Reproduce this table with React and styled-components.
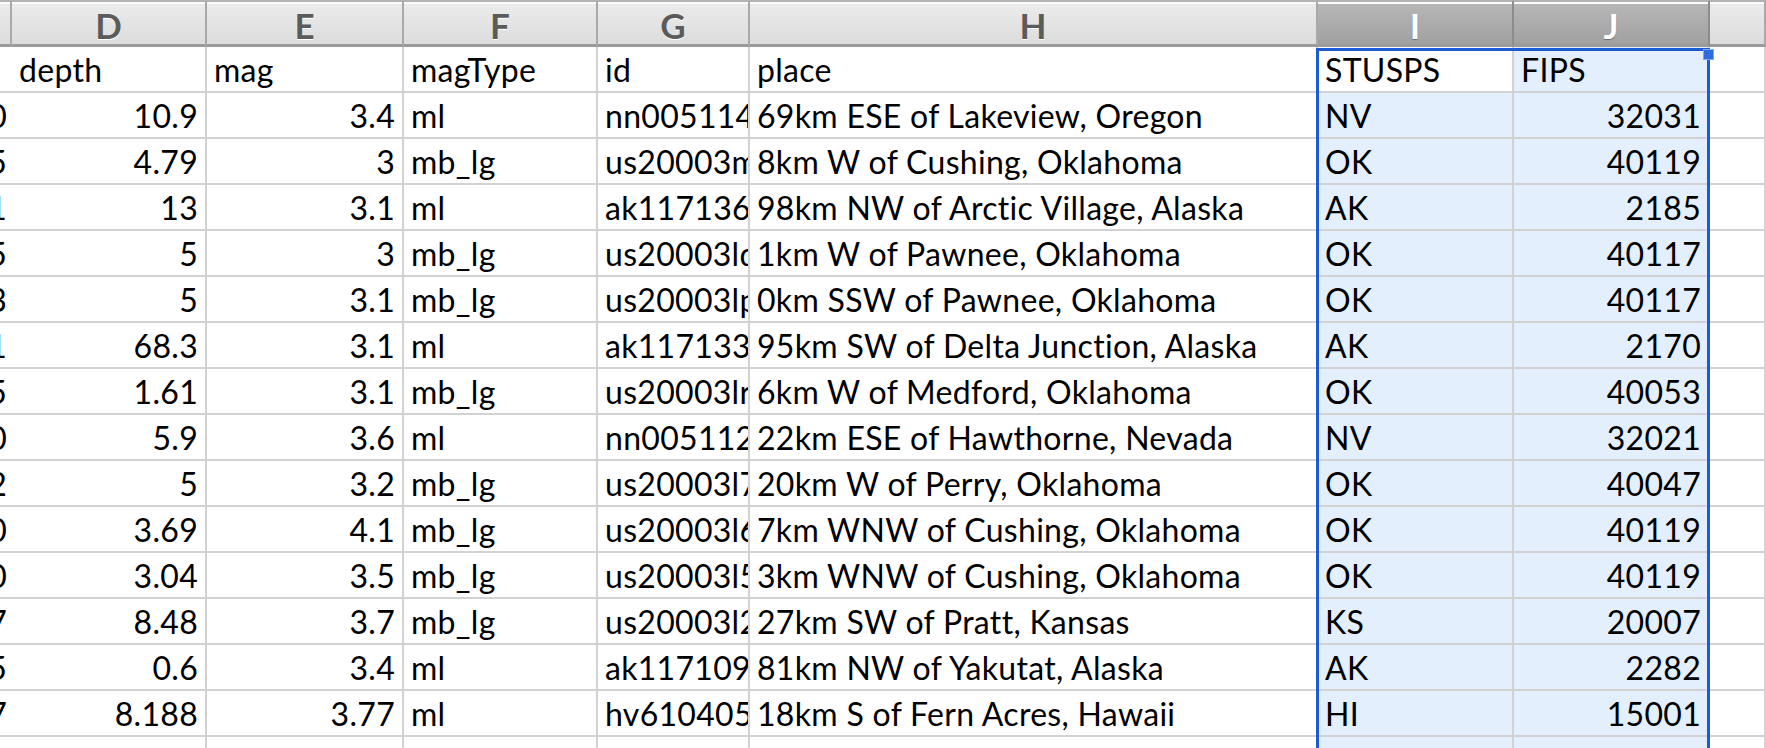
import React from 'react'
import styled, { createGlobalStyle } from 'styled-components'

const GlobalStyle = createGlobalStyle`
  html, body {
    margin: 0;
    padding: 0;
    background: #ffffff;
    overflow: hidden;
  }
  body {
    font-family: Lato, "Liberation Sans", sans-serif;
  }
`

const columns = [
  { key: 'C', width: 12, align: 'right' },
  { key: 'D', width: 195, align: 'right' },
  { key: 'E', width: 197, align: 'right' },
  { key: 'F', width: 194, align: 'left' },
  { key: 'G', width: 152, align: 'left' },
  { key: 'H', width: 568, align: 'left' },
  { key: 'I', width: 196, align: 'left', selected: true },
  { key: 'J', width: 196, align: 'right', selected: true },
  { key: 'K', width: 80, align: 'left' },
]

const fields = ['', 'depth', 'mag', 'magType', 'id', 'place', 'STUSPS', 'FIPS', '']

const rows = [
  ['-119.9460', '10.9', '3.4', 'ml', 'nn00511432', '69km ESE of Lakeview, Oregon', 'NV', '32031'],
  ['-96.8575', '4.79', '3', 'mb_lg', 'us20003mxu', '8km W of Cushing, Oklahoma', 'OK', '40119'],
  ['-146.1451', '13', '3.1', 'ml', 'ak11713611', '98km NW of Arctic Village, Alaska', 'AK', '2185'],
  ['-96.8285', '5', '3', 'mb_lg', 'us20003ldq', '1km W of Pawnee, Oklahoma', 'OK', '40117'],
  ['-96.8033', '5', '3.1', 'mb_lg', 'us20003lpz', '0km SSW of Pawnee, Oklahoma', 'OK', '40117'],
  ['-146.9181', '68.3', '3.1', 'ml', 'ak11713374', '95km SW of Delta Junction, Alaska', 'AK', '2170'],
  ['-97.8705', '1.61', '3.1', 'mb_lg', 'us20003lr3', '6km W of Medford, Oklahoma', 'OK', '40053'],
  ['-118.3640', '5.9', '3.6', 'ml', 'nn00511250', '22km ESE of Hawthorne, Nevada', 'NV', '32021'],
  ['-97.5022', '5', '3.2', 'mb_lg', 'us20003l7k', '20km W of Perry, Oklahoma', 'OK', '40047'],
  ['-96.8430', '3.69', '4.1', 'mb_lg', 'us20003l6a', '7km WNW of Cushing, Oklahoma', 'OK', '40119'],
  ['-96.8270', '3.04', '3.5', 'mb_lg', 'us20003l5y', '3km WNW of Cushing, Oklahoma', 'OK', '40119'],
  ['-98.9707', '8.48', '3.7', 'mb_lg', 'us20003l2e', '27km SW of Pratt, Kansas', 'KS', '20007'],
  ['-140.5045', '0.6', '3.4', 'ml', 'ak11710935', '81km NW of Yakutat, Alaska', 'AK', '2282'],
  ['-155.1167', '8.188', '3.77', 'ml', 'hv61040517', '18km S of Fern Acres, Hawaii', 'HI', '15001'],
  ['-119.9850', '11.2', '3.1', 'ml', 'nn00511401', '73km ESE of Lakeview, Oregon', 'NV', '32031'],
]

const template = columns.map((c, i) => (i === columns.length - 1 ? '1fr' : `${c.width}px`)).join(' ')

const Page = styled.div`
  position: relative;
  width: 1766px;
  height: 748px;
  overflow: hidden;
  background: #ffffff;
`

const Sheet = styled.div`
  display: grid;
  grid-template-columns: ${template};
  grid-auto-rows: 46px;
  grid-template-rows: 47px;
`

const HeaderCell = styled.div`
  box-sizing: border-box;
  display: flex;
  align-items: center;
  justify-content: center;
  border-top: 2px solid #b3b3b3;
  border-bottom: 3px solid #9b9b9b;
  border-right: 2px solid ${p => (p.$selected ? '#8c8c8c' : '#a9a9a9')};
  box-shadow: inset 0 2px 0 #fbfbfb;
  background: ${p =>
    p.$selected
      ? 'linear-gradient(#b7b7b7, #a1a1a1)'
      : 'linear-gradient(#ececec, #dcdcdc)'};
  color: ${p => (p.$selected ? '#ffffff' : '#5b5b5b')};
  text-shadow: ${p => (p.$selected ? '0 1px 1px rgba(0,0,0,0.35)' : '0 1px 0 #ffffff')};
  font-family: Lato, "Liberation Sans", sans-serif;
  font-weight: 700;
  font-size: 35px;
  padding-top: 3px;
  overflow: hidden;
`

const Cell = styled.div`
  box-sizing: border-box;
  display: flex;
  align-items: center;
  justify-content: ${p => (p.$align === 'right' ? 'flex-end' : 'flex-start')};
  padding: 0 7px 0 7px;
  border-right: 2px solid #d2d2d2;
  border-bottom: 2px solid #d2d2d2;
  background: ${p => (p.$selected ? '#e3effc' : '#ffffff')};
  color: #000000;
  font-size: 32px;
  letter-spacing: 0.3px;
  white-space: nowrap;
  overflow: hidden;
`

const Selection = styled.div`
  position: absolute;
  left: 1316px;
  top: 48px;
  width: 394px;
  height: 720px;
  box-sizing: border-box;
  border: 3px solid #1c5ad6;
  pointer-events: none;
`

const Handle = styled.div`
  position: absolute;
  top: -2px;
  right: -7px;
  width: 9px;
  height: 9px;
  background: #2f6be0;
  border: 1px solid #7fa6ee;
`

export default function App() {
  return (
    <Page>
      <GlobalStyle />
      <Sheet>
        {columns.map(c => (
          <HeaderCell key={c.key} $selected={c.selected}>
            {c.key === 'C' || c.key === 'K' ? '' : c.key}
          </HeaderCell>
        ))}
        {fields.map((f, i) => (
          <Cell
            key={'f' + i}
            $align="left"
            $selected={columns[i].key === 'J'}
          >
            {f}
          </Cell>
        ))}
        {rows.map((r, ri) =>
          columns.map((c, ci) => (
            <Cell key={ri + '-' + ci} $align={c.align} $selected={c.selected}>
              {r[ci] || ''}
            </Cell>
          ))
        )}
      </Sheet>
      <Selection>
        <Handle />
      </Selection>
    </Page>
  )
}
